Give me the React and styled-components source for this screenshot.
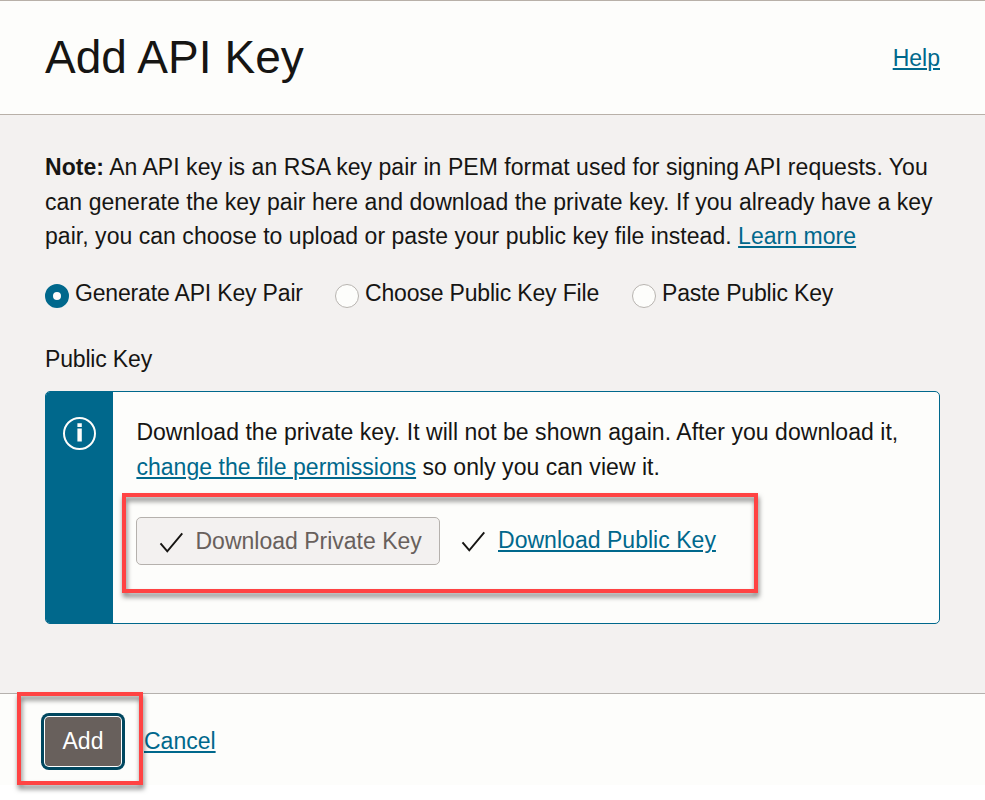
import React from "react";
import styled, { createGlobalStyle } from "styled-components";

const Global = createGlobalStyle`
  * { box-sizing: border-box; }
  body {
    margin: 0;
    background: #fff;
    color: #161513;
    font: 23px/34.5px "Liberation Sans", Arial, sans-serif;
  }
`;

const Dialog = styled.div`
  width: 985px;
  height: 800px;
  display: flex;
  flex-direction: column;
  overflow: hidden;
`;

const Header = styled.header`
  height: 115px;
  padding: 0 45px;
  display: flex;
  align-items: center;
  justify-content: space-between;
  background: #fdfdfb;
  border-top: 1px solid #b8b0a8;
  border-bottom: 1px solid #b8b0a8;
`;

const Title = styled.h1`
  margin: -2px 0 0;
  font-size: 46px;
  line-height: 54px;
  font-weight: 400;
  letter-spacing: 0.05px;
`;

const Link = styled.a`
  color: #00688c;
  text-decoration: underline;
  text-decoration-thickness: 2px;
  text-underline-offset: 2px;
  white-space: nowrap;
`;

const HelpLink = styled(Link)`
  margin-top: 2px;
`;

const Body = styled.main`
  height: 578px;
  padding: 35px 45px 0;
  background: #f3f1f0;
`;

const Text = styled.p`
  margin: 0;
  white-space: nowrap;
  letter-spacing: 0.038px;
`;

const Radios = styled.div`
  display: grid;
  grid-template-columns: 290px 297px auto;
  margin-top: 22px;
  height: 35px;
`;

const RadioLabel = styled.label`
  display: flex;
  gap: 6px;
  white-space: nowrap;
  letter-spacing: -0.17px;
`;

const RadioDot = styled.span`
  width: 24px;
  height: 24px;
  margin-top: 8px;
  border-radius: 50%;
  background: #fdfdfb;
  border: ${(p) => (p.$on ? "8.5px solid #00688c" : "1px solid #b8b4b0")};
`;

const FieldLabel = styled.div`
  margin-top: 31px;
  height: 34px;
  letter-spacing: -0.17px;
`;

const Notice = styled.section`
  display: flex;
  margin-top: 15px;
  height: 233px;
  border: 1px solid #00688c;
  border-radius: 5px;
  overflow: hidden;
  background: #fdfdfb;
`;

const NoticeRail = styled.div`
  width: 67px;
  flex: none;
  display: flex;
  padding: 24px 0 0 16px;
  background: #00688c;
`;

const NoticeContent = styled.div`
  padding: 23px 0 0 23px;
`;

const NoticeText = styled(Text)`
  padding-left: 0.4px;
  line-height: 35px;
`;

const Actions = styled.div`
  position: relative;
  display: flex;
  align-items: center;
  margin-top: 32px;
  height: 48px;
  width: 600px;
`;

const DownloadButton = styled.button`
  width: 304px;
  height: 48px;
  padding: 1px 0 0 22px;
  display: flex;
  align-items: center;
  gap: 12.5px;
  font: inherit;
  color: #68605c;
  background: #f3f1f0;
  border: 1px solid #b5b1ad;
  border-radius: 5px;
  white-space: nowrap;
`;

const DownloadLink = styled.div`
  display: flex;
  align-items: center;
  gap: 13px;
  margin: -1px 0 0 21px;
  letter-spacing: 0.03px;
`;

const Highlight = styled.div`
  position: absolute;
  left: ${(p) => p.$x}px;
  top: ${(p) => p.$y}px;
  width: ${(p) => p.$w}px;
  height: ${(p) => p.$h}px;
  border: 4px solid #ff4343;
  filter: drop-shadow(1px 4px 2.5px rgba(0, 0, 0, 0.5));
  pointer-events: none;
`;

const Footer = styled.footer`
  position: relative;
  height: 92px;
  display: flex;
  align-items: center;
  padding: 3px 0 0 45px;
  gap: 23px;
  background: #fdfdfb;
  border-top: 1px solid #b5b1ad;
`;

const AddButton = styled.button`
  width: 76px;
  height: 49px;
  padding: 0;
  border: 0;
  border-radius: 4px;
  font: inherit;
  color: #fff;
  background: #68605c;
  box-shadow: 0 0 0 1px #fff, 0 0 0 4px #00475f;
`;

const Check = () => (
  <svg width="24" height="24" viewBox="0 0 24 24" fill="none" stroke="#161513" strokeWidth="2">
    <path d="M1.5 14.3 8.3 22.3 23.3 4.3" />
  </svg>
);

const InfoIcon = () => (
  <svg width="34" height="34" viewBox="0 0 34 34" fill="none">
    <circle cx="17.5" cy="17.5" r="15.5" stroke="#fdfdfb" strokeWidth="2" />
    <path d="M15.4 7.2h4.4v3.8h-4.4zM15.4 12.5h4.4v13.1h-4.4z" fill="#fdfdfb" />
  </svg>
);

const Radio = ({ on, children }) => (
  <RadioLabel>
    <RadioDot $on={on} />
    {children}
  </RadioLabel>
);

export default function App() {
  return (
    <>
      <Global />
      <Dialog>
        <Header>
          <Title>Add API Key</Title>
          <HelpLink>Help</HelpLink>
        </Header>
        <Body>
          <Text>
            <b>Note:</b> An API key is an RSA key pair in PEM format used for signing API requests. You
            <br />
            can generate the key pair here and download the private key. If you already have a key
            <br />
            pair, you can choose to upload or paste your public key file instead. <Link>Learn more</Link>
          </Text>
          <Radios>
            <Radio on>Generate API Key Pair</Radio>
            <Radio>Choose Public Key File</Radio>
            <Radio>Paste Public Key</Radio>
          </Radios>
          <FieldLabel>Public Key</FieldLabel>
          <Notice>
            <NoticeRail>
              <InfoIcon />
            </NoticeRail>
            <NoticeContent>
              <NoticeText>
                Download the private key. It will not be shown again. After you download it,
                <br />
                <Link>change the file permissions</Link> so only you can view it.
              </NoticeText>
              <Actions>
                <DownloadButton>
                  <Check />
                  Download Private Key
                </DownloadButton>
                <DownloadLink>
                  <Check />
                  <Link>Download Public Key</Link>
                </DownloadLink>
                <Highlight $x={-14} $y={-24} $w={636} $h={100} />
              </Actions>
            </NoticeContent>
          </Notice>
        </Body>
        <Footer>
          <AddButton>Add</AddButton>
          <Link>Cancel</Link>
          <Highlight $x={17} $y={-2} $w={126} $h={93} />
        </Footer>
      </Dialog>
    </>
  );
}
